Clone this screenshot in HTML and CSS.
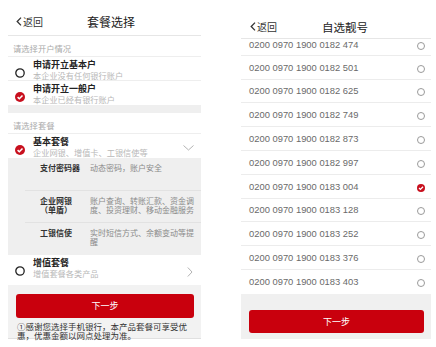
FILE: index.html
```html
<!DOCTYPE html>
<html>
<head>
<meta charset="utf-8">
<link rel="stylesheet" href="styles.css">
</head>
<body>
<div class="stage">
  <div class="phone left">
    <div class="hdr">
      <span class="back"><svg width="6" height="9" viewBox="0 0 6 9"><path d="M5 0.6 L1.2 4.5 L5 8.4" stroke="#333" stroke-width="1.3" fill="none"/></svg>返回</span>
      <span class="title">套餐选择</span>
    </div>
    <div class="label">请选择开户情况</div>
    <div class="opt line">
      <svg class="radio" width="10" height="10" viewBox="0 0 10 10"><circle cx="5" cy="5" r="4.2" stroke="#222" stroke-width="1.3" fill="none"/></svg>
      <div class="txt"><div class="t">申请开立基本户</div><div class="s">本企业没有任何银行账户</div></div>
    </div>
    <div class="opt">
      <svg class="radio" width="10" height="10" viewBox="0 0 10 10"><circle cx="5" cy="5" r="5" fill="#c8101e"/><path d="M2.6 5.1 L4.3 6.7 L7.5 3.4" stroke="#fff" stroke-width="1.5" fill="none"/></svg>
      <div class="txt"><div class="t">申请开立一般户</div><div class="s">本企业已经有银行账户</div></div>
    </div>
    <div class="gap"></div>
    <div class="label">请选择套餐</div>
    <div class="opt">
      <svg class="radio" width="10" height="10" viewBox="0 0 10 10"><circle cx="5" cy="5" r="5" fill="#c8101e"/><path d="M2.6 5.1 L4.3 6.7 L7.5 3.4" stroke="#fff" stroke-width="1.5" fill="none"/></svg>
      <div class="txt"><div class="t">基本套餐</div><div class="s">企业网银、增值卡、工银信使等</div></div>
      <svg class="chev-down" width="11" height="6" viewBox="0 0 11 6"><path d="M0.5 0.5 L5.5 5 L10.5 0.5" stroke="#aaa" stroke-width="0.9" fill="none"/></svg>
    </div>
    <div class="detail">
      <div class="item first"><div class="k">支付密码器</div><div class="v">动态密码，账户安全</div></div>
      <div class="item"><div class="k">企业网银<br>（单盾）</div><div class="v">账户查询、转账汇款、资金调度、投资理财、移动金融服务</div></div>
      <div class="item last"><div class="k">工银信使</div><div class="v">实时短信方式、余额变动等提醒</div></div>
    </div>
    <div class="opt tall">
      <svg class="radio" width="10" height="10" viewBox="0 0 10 10"><circle cx="5" cy="5" r="4.2" stroke="#222" stroke-width="1.3" fill="none"/></svg>
      <div class="txt"><div class="t">增值套餐</div><div class="s">增值套餐各类产品</div></div>
      <svg class="chev-right" width="6" height="10" viewBox="0 0 6 10"><path d="M0.8 0.5 L5 5 L0.8 9.5" stroke="#aaa" stroke-width="0.9" fill="none"/></svg>
    </div>
    <div class="foot">
      <div class="btn">下一步</div>
      <p class="note">①感谢您选择手机银行，本产品套餐可享受优<br>惠，优惠金额以网点处理为准。</p>
    </div>
  </div>

  <div class="phone right">
    <div class="hdr hdr-r">
      <span class="back"><svg width="6" height="9" viewBox="0 0 6 9"><path d="M5 0.6 L1.2 4.5 L5 8.4" stroke="#333" stroke-width="1.3" fill="none"/></svg>返回</span>
      <span class="title">自选靓号</span>
    </div>
    <div class="list">
      <div class="row first"><span>0200 0970 1900 0182 474</span><i class="rd"></i></div>
      <div class="row"><span>0200 0970 1900 0182 501</span><i class="rd"></i></div>
      <div class="row"><span>0200 0970 1900 0182 625</span><i class="rd"></i></div>
      <div class="row"><span>0200 0970 1900 0182 749</span><i class="rd"></i></div>
      <div class="row"><span>0200 0970 1900 0182 873</span><i class="rd"></i></div>
      <div class="row"><span>0200 0970 1900 0182 997</span><i class="rd"></i></div>
      <div class="row"><span>0200 0970 1900 0183 004</span><svg class="rdc" width="8" height="8" viewBox="0 0 8 8"><circle cx="4" cy="4" r="4" fill="#c8101e"/><path d="M2 4.1 L3.4 5.4 L6 2.8" stroke="#fff" stroke-width="1.3" fill="none"/></svg></div>
      <div class="row"><span>0200 0970 1900 0183 128</span><i class="rd"></i></div>
      <div class="row"><span>0200 0970 1900 0183 252</span><i class="rd"></i></div>
      <div class="row"><span>0200 0970 1900 0183 376</span><i class="rd"></i></div>
      <div class="row"><span>0200 0970 1900 0183 403</span><i class="rd"></i></div>
    </div>
    <div class="foot-r">
      <div class="btn btn-r">下一步</div>
    </div>
  </div>
</div>
</body>
</html>
```
FILE: styles.css
```css
* { box-sizing: border-box; }
html, body { margin: 0; padding: 0; background: #fff; }
body {
  font-family: "Noto Sans CJK SC", "Liberation Sans", sans-serif;
  color: #222;
  width: 436px;
  height: 347px;
  overflow: hidden;
}
.stage { display: flex; align-items: flex-start; }
.phone { background: #fff; }
.left { width: 193px; margin-left: 8px; margin-top: 8px; }
.right { width: 190px; margin-left: 40px; margin-top: 15px; }

.hdr {
  display: flex;
  align-items: center;
  height: 28px;
  border-bottom: 1px solid #e6e6e6;
  padding-left: 8px;
}
.hdr-r { height: 24px; padding-left: 9px; }
.back {
  display: flex;
  align-items: center;
  gap: 1px;
  font-size: 10px;
  line-height: 12px;
  color: #333;
  width: 27px;
}
.title { font-size: 12px; line-height: 14px; margin-left: 44px; color: #222; }
.hdr-r .title { font-size: 11.5px; margin-left: 45px; }

.label {
  height: 21px;
  padding: 7px 0 0 5px;
  font-size: 8.3px;
  line-height: 10px;
  color: #aaa;
  border-bottom: 1px solid #eee;
}
.opt {
  display: flex;
  align-items: flex-start;
  height: 24px;
  padding: 3px 0 0 7px;
}
.opt.line { border-bottom: 1px solid #eee; }
.opt.tall { height: 30px; }
.radio { flex: none; margin-top: 8px; }
.txt { margin-left: 8px; flex: 1; }
.t { font-size: 9px; line-height: 10px; font-weight: bold; color: #222; }
.s { font-size: 8.2px; line-height: 10px; color: #b8b8b8; }
.chev-down { margin: 8px 7px 0 0; }
.chev-right { margin: 9px 8px 0 0; }

.gap { height: 8px; background: #efefef; }

.detail { background: #efefef; }
.item {
  display: flex;
  margin-left: 17px;
  padding: 5px 0 8px 15px;
  border-bottom: 1px solid #e2e2e2;
  font-size: 8px;
  line-height: 9px;
}
.item.first { height: 33px; }
.item.last { border-bottom: none; padding-bottom: 9px; }
.k { width: 50px; flex: none; color: #333; font-weight: bold; }
.v { width: 110px; color: #8a8a8a; }

.foot {
  background: #f2f2f2;
  padding: 9px 0 0 0;
  height: 54px;
  border-bottom: 1px solid #e0e0e0;
}
.btn {
  height: 24px;
  margin: 0 7px 0 8px;
  background: #c9000d;
  border-radius: 3px;
  color: #fff;
  font-size: 9px;
  line-height: 24px;
  text-align: center;
}
.note {
  margin: 4px 0 0 9px;
  font-size: 8.5px;
  line-height: 9px;
  color: #333;
}

.row {
  display: flex;
  align-items: center;
  justify-content: space-between;
  height: 23.8px;
  border-bottom: 1px solid #ececec;
  padding: 0 6px 0 8px;
  font-family: "Liberation Sans", sans-serif;
  font-size: 9.4px;
  line-height: 11px;
  color: #6a6a6a;
}
.row.first { height: 16.8px; align-items: flex-start; }
.row:last-child { border-bottom: none; }
.rd {
  display: block;
  width: 8px;
  height: 8px;
  border: 1px solid #9a9a9a;
  border-radius: 50%;
  margin-top: 3px;
}
.rdc { margin-top: 3px; }
.foot-r {
  background: #f0f0f0;
  padding: 16px 7px 6px 8px;
}
.btn-r { margin: 0; height: 23px; line-height: 23px; }
```
